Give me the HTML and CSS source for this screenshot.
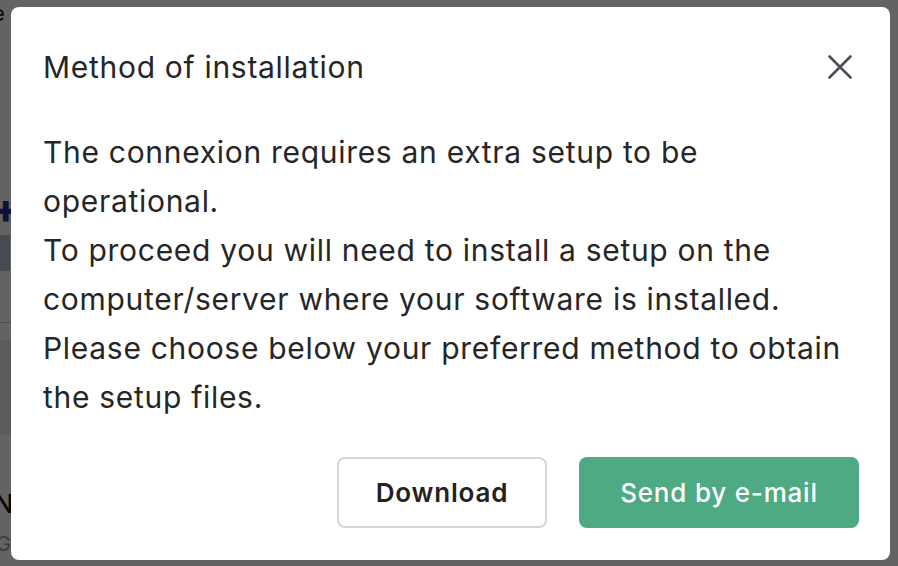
FILE: index.html
```html
<!DOCTYPE html>
<html lang="en">
<head>
<meta charset="utf-8">
<title>Method of installation</title>
<link rel="stylesheet" href="styles.css">
</head>
<body>
<div class="page">
  <div class="page-mark top">e</div>
  <div class="page-mark plus">+</div>
  <div class="page-mark block"></div>
  <div class="page-rule r1"></div>
  <div class="page-band"></div>
  <div class="page-mark letter-n">N</div>
  <div class="page-mark letter-g">G</div>
</div>
<div class="overlay">
  <div class="modal" role="dialog" aria-labelledby="title">
    <div class="modal-header">
      <h2 id="title" class="modal-title">Method of installation</h2>
      <button class="close" aria-label="Close">
        <svg width="24" height="24" viewBox="0 0 24 24"><path d="M1.5 1.5 L22.5 22.5 M22.5 1.5 L1.5 22.5" stroke="#4a4f55" stroke-width="2.6" stroke-linecap="round" fill="none"/></svg>
      </button>
    </div>
    <div class="modal-body">
      <p>The connexion requires an extra setup to be<br>operational.</p>
      <p>To proceed you will need to install a setup on the<br>computer/server where your software is installed.</p>
      <p>Please choose below your preferred method to obtain<br>the setup files.</p>
    </div>
    <div class="modal-footer">
      <button class="btn btn-outline">Download</button>
      <button class="btn btn-primary">Send by e-mail</button>
    </div>
  </div>
</div>
</body>
</html>
```
FILE: styles.css
```css
html, body {
  margin: 0;
  padding: 0;
  height: 100%;
}
body {
  background: #ffffff;
  font-family: Inter, "Noto Sans", sans-serif;
  color: #262626;
  overflow: hidden;
}
.page {
  position: relative;
  height: 566px;
}
.page-mark {
  position: absolute;
  font-family: Inter, sans-serif;
}
.page-mark.top { left: -8px; top: 0; font-size: 22px; color: #222; }
.page-mark.plus { left: -8px; top: 184px; font-size: 40px; font-weight: 800; color: #1f2c9e; }
.page-mark.block { left: 0; top: 235px; width: 10px; height: 36px; background: #b7bfcc; }
.page-rule { position: absolute; left: 0; width: 12px; height: 1px; background: #c8c8c8; }
.page-rule.r1 { top: 322px; }
.page-band { position: absolute; left: 0; top: 340px; width: 12px; height: 95px; background: #ededed; }
.page-mark.letter-n { left: -6px; top: 488px; font-size: 26px; font-weight: 500; color: #111; }
.page-mark.letter-g { left: -4px; top: 532px; font-size: 20px; color: #9a9a9a; }

.overlay {
  position: absolute;
  inset: 0;
  background: rgba(0, 0, 0, 0.61);
  padding: 7px 0 0 11px;
}
.modal {
  width: 879px;
  height: 553px;
  background: #fff;
  border-radius: 8px;
  box-sizing: border-box;
  padding: 40px 31px 32px 32px;
  display: flex;
  flex-direction: column;
}
.modal-header {
  display: flex;
  align-items: center;
  justify-content: space-between;
  height: 40px;
}
.modal-title {
  margin: 0;
  font-size: 30px;
  font-weight: 400;
  letter-spacing: 0.7px;
  line-height: 40px;
  color: #262626;
}
.close {
  border: 0;
  background: none;
  padding: 0;
  margin-right: 7px;
  width: 24px;
  height: 24px;
  display: flex;
}
.modal-body {
  margin-top: 41px;
  font-size: 30px;
  letter-spacing: 0.7px;
  line-height: 49px;
}
.modal-body p {
  margin: 0;
}
.modal-footer {
  margin-top: auto;
  display: flex;
  justify-content: flex-end;
  gap: 32px;
}
.btn {
  height: 71px;
  border-radius: 8px;
  font-family: Inter, sans-serif;
  font-size: 26px;
  font-weight: 600;
  letter-spacing: 0.8px;
  box-sizing: border-box;
}
.btn-outline {
  width: 210px;
  background: #fff;
  border: 2px solid #d3d7dc;
  color: #222;
}
.btn-primary {
  width: 280px;
  background: #4eaa82;
  border: 0;
  color: #fff;
  font-weight: 500;
}
```
